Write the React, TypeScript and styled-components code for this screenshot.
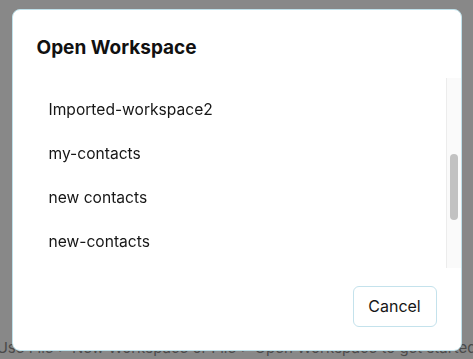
import React, { useLayoutEffect, useRef, useState } from 'react';
import styled, { createGlobalStyle } from 'styled-components';

const GlobalStyle = createGlobalStyle`
  html, body {
    margin: 0;
    padding: 0;
    background: #888888;
    font-family: Inter, "Noto Sans", sans-serif;
    overflow: hidden;
  }
`;

const workspaces = [
  'contacts',
  'demo',
  'example',
  'Imported-workspace',
  'Imported-workspace1',
  'Imported-workspace2',
  'my-contacts',
  'new contacts',
  'new-contacts',
  'test',
  'workspace',
  'workspace2',
];

const Page = styled.div`
  height: 100vh;
  display: flex;
  justify-content: center;
  padding-top: 338px;
  box-sizing: border-box;
`;

const Hint = styled.p`
  margin: 0;
  white-space: nowrap;
  font-size: 15px;
  line-height: 20px;
  color: #4a4a4a;
`;

const Overlay = styled.div`
  position: fixed;
  inset: 0;
  display: flex;
  align-items: center;
  justify-content: center;
`;

const Dialog = styled.section`
  width: 450px;
  box-sizing: border-box;
  background: #ffffff;
  border: 1px solid #bfe1ea;
  border-radius: 8px;
  display: flex;
  flex-direction: column;
`;

const Title = styled.h2`
  margin: 0;
  padding: 26px 24px 18px;
  font-size: 19px;
  line-height: 24px;
  font-weight: 700;
  color: #111111;
`;

const ScrollArea = styled.div`
  display: flex;
  height: 190px;
`;

const List = styled.ul`
  flex: 1;
  list-style: none;
  margin: 0;
  padding: 8px 0;
  overflow-y: scroll;
  scrollbar-width: none;

  &::-webkit-scrollbar {
    display: none;
  }
`;

const Item = styled.li`
  height: 44px;
  display: flex;
  align-items: center;
  padding: 0 36px;
  font-size: 15.6px;
  color: #161616;
  cursor: pointer;
`;

const Track = styled.div`
  position: relative;
  width: 14px;
  flex: none;
  background: #fafafa;
  border-left: 1px solid #ececec;
`;

const Thumb = styled.div`
  position: absolute;
  left: 3px;
  width: 8px;
  border-radius: 4px;
  background: #c2c2c2;
`;

const Footer = styled.footer`
  display: flex;
  justify-content: flex-end;
  padding: 18px 24px 23px;
`;

const CancelButton = styled.button`
  width: 84px;
  height: 41px;
  background: #ffffff;
  border: 1px solid #c4e2ec;
  border-radius: 6px;
  font-family: inherit;
  font-size: 16px;
  color: #161616;
  cursor: pointer;
`;

export default function App() {
  const listRef = useRef<HTMLUListElement>(null);
  const [thumb, setThumb] = useState({ top: 0, height: 0 });

  const updateThumb = () => {
    const el = listRef.current;
    if (!el) return;
    const height = (el.clientHeight * el.clientHeight) / el.scrollHeight;
    const max = el.scrollHeight - el.clientHeight;
    const top = max > 0 ? (el.scrollTop / max) * (el.clientHeight - height) : 0;
    setThumb({ top, height });
  };

  useLayoutEffect(() => {
    if (listRef.current) listRef.current.scrollTop = 218;
    updateThumb();
  }, []);

  return (
    <>
      <GlobalStyle />
      <Page>
        <Hint>Use File &gt; New Workspace or File &gt; Open Workspace to get started</Hint>
      </Page>
      <Overlay>
        <Dialog role="dialog" aria-label="Open Workspace">
          <Title>Open Workspace</Title>
          <ScrollArea>
            <List ref={listRef} onScroll={updateThumb}>
              {workspaces.map((name) => (
                <Item key={name}>{name}</Item>
              ))}
            </List>
            <Track>
              <Thumb style={{ top: thumb.top, height: thumb.height }} />
            </Track>
          </ScrollArea>
          <Footer>
            <CancelButton>Cancel</CancelButton>
          </Footer>
        </Dialog>
      </Overlay>
    </>
  );
}
